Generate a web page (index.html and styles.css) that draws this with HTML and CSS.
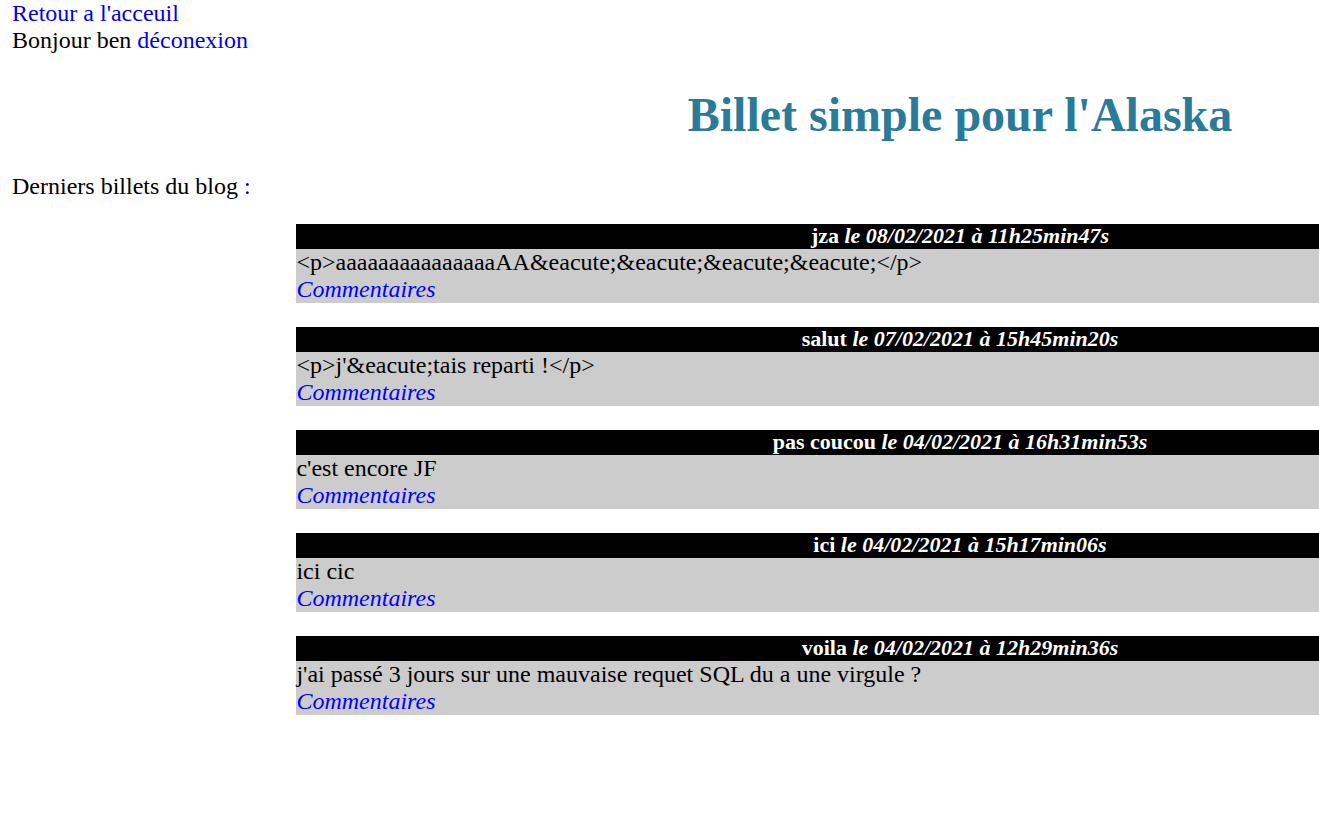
FILE: index.html
```html
<!DOCTYPE html>
<html lang="fr">
<head>
<meta charset="utf-8">
<title>Billet simple pour l'Alaska</title>
<link rel="stylesheet" href="styles.css">
</head>
<body>
<nav class="session">
<a href="#">Retour a l'acceuil</a><br>
Bonjour ben <a href="#">déconexion</a>
</nav>
<h1 class="title">Billet simple pour l'Alaska</h1>
<p class="intro">Derniers billets du blog :</p>
<main class="posts">
<article class="news">
<h3>jza <em>le 08/02/2021 à 11h25min47s</em></h3>
<p>&lt;p&gt;aaaaaaaaaaaaaaaAA&amp;eacute;&amp;eacute;&amp;eacute;&amp;eacute;&lt;/p&gt;<br><em><a href="#">Commentaires</a></em></p>
</article>
<article class="news">
<h3>salut <em>le 07/02/2021 à 15h45min20s</em></h3>
<p>&lt;p&gt;j'&amp;eacute;tais reparti !&lt;/p&gt;<br><em><a href="#">Commentaires</a></em></p>
</article>
<article class="news">
<h3>pas coucou <em>le 04/02/2021 à 16h31min53s</em></h3>
<p>c'est encore JF<br><em><a href="#">Commentaires</a></em></p>
</article>
<article class="news">
<h3>ici <em>le 04/02/2021 à 15h17min06s</em></h3>
<p>ici cic<br><em><a href="#">Commentaires</a></em></p>
</article>
<article class="news">
<h3>voila <em>le 04/02/2021 à 12h29min36s</em></h3>
<p>j'ai passé 3 jours sur une mauvaise requet SQL du a une virgule ?<br><em><a href="#">Commentaires</a></em></p>
</article>
</main>
</body>
</html>
```

FILE: styles.css
```css
html {
  overflow-x: hidden;
}

body {
  width: calc(100% + 577px);
  margin: 0;
  padding: 0 12px;
  font: 24px/27px "Liberation Serif", "Times New Roman", serif;
  color: #000;
  background: #fff;
}

a {
  color: #00e;
  text-decoration: none;
}

.title {
  margin: 32px 0 30px;
  font-size: 48px;
  line-height: 57px;
  text-align: center;
  color: #2a7a99;
}

.intro {
  margin: 0 0 24px;
}

.posts {
  width: 70%;
  margin: 0 auto;
}

.news {
  margin-bottom: 24px;
}

.news h3 {
  margin: 0;
  padding-bottom: 2px;
  font-size: 22px;
  line-height: 23px;
  text-align: center;
  color: #fff;
  background: #000;
}

.news p {
  margin: 0;
  background: #ccc;
}

.news a {
  color: #00f;
}
```
